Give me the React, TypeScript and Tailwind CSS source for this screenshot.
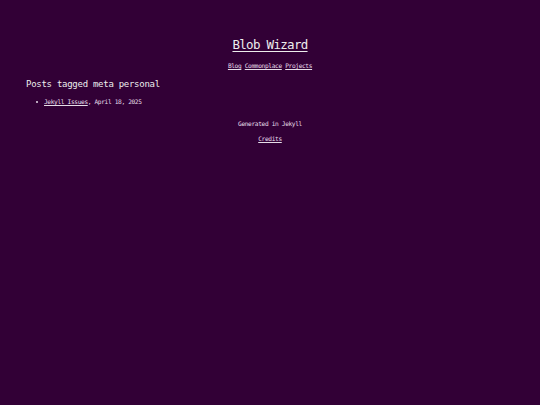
import React from 'react';

const mono = { fontFamily: '"DejaVu Sans Mono", "Liberation Mono", monospace' };

const posts = [{ title: 'Jekyll Issues', date: 'April 18, 2025' }];

export default function App() {
  return (
    <div className="min-h-[405px] w-full bg-[#320036] text-[#ededed]" style={mono}>
      <header className="flex flex-col items-center pt-[38px]">
        <h1 className="text-[12.5px] leading-[14px] tracking-[-0.7px] font-normal">
          <a href="#" className="underline underline-offset-[2px]">Blob Wizard</a>
        </h1>
        <nav className="mt-[10px] flex gap-[3.4px] text-[6.2px] leading-[8px] tracking-[-0.36px] text-[#e6dde8]">
          <a href="#" className="underline">Blog</a>
          <a href="#" className="underline">Commonplace</a>
          <a href="#" className="underline">Projects</a>
        </nav>
      </header>

      <main className="px-[26px]">
        <h2 className="mt-[8.5px] text-[9px] leading-[11px] tracking-[-0.27px] font-normal">Posts tagged meta personal</h2>
        <ul className="mt-[8.5px] pl-[10px]">
          {posts.map((p) => (
            <li key={p.title} className="flex items-center text-[6.2px] leading-[8px] tracking-[-0.36px] text-[#e6dde8]">
              <span className="mr-[6px] h-[2px] w-[2px] rounded-full bg-[#e6dde8]" />
              <a href="#" className="underline">{p.title}</a>
              <span>, {p.date}</span>
            </li>
          ))}
        </ul>
      </main>

      <footer className="flex flex-col items-center text-[6.2px] leading-[8px] tracking-[-0.36px] text-[#e6dde8]">
        <p className="mt-[14px]">Generated in Jekyll</p>
        <a href="#" className="mt-[7px] underline">Credits</a>
      </footer>
    </div>
  );
}
